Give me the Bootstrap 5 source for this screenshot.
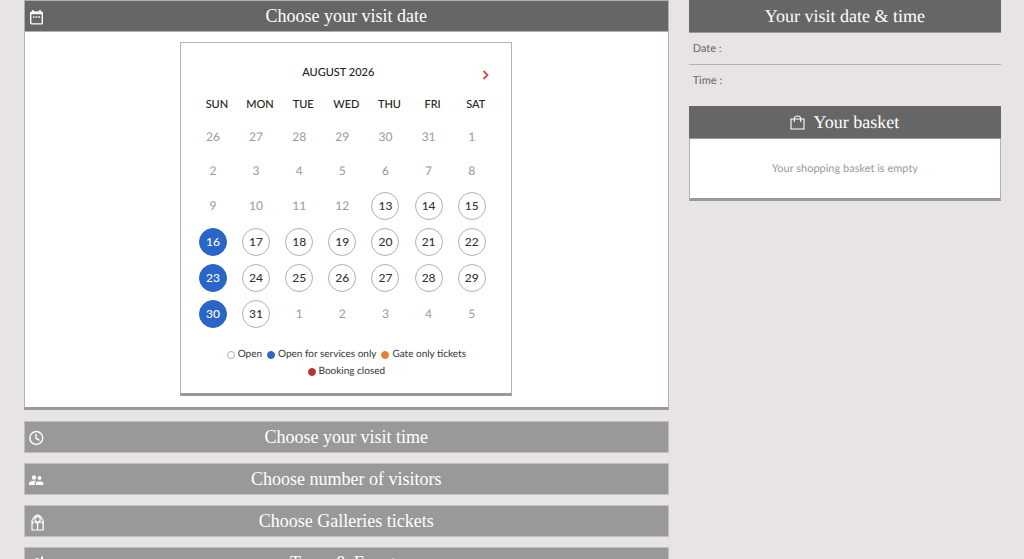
<!DOCTYPE html>
<html lang="en">
<head>
<meta charset="utf-8">
<meta name="viewport" content="width=device-width, initial-scale=1">
<title>Choose your visit date</title>
<link href="https://cdn.jsdelivr.net/npm/bootstrap@5.3.0/dist/css/bootstrap.min.css" rel="stylesheet">
<style>
  body { background: #e8e4e5; font-family: Lato, sans-serif; font-size: 11px; line-height: 16px; color: #333; text-rendering: geometricPrecision; }
  .page { padding: 0 23px 0 24px; }
  .page > .row { --bs-gutter-x: 20px; }
  .bar { font-family: "Liberation Serif", serif; font-size: 18px; line-height: 20px; font-weight: 400; color: #fff; }
  .step { width: 100%; min-height: 32px; padding: 5px 48px; border: 1px solid #c0c0c0; background: #999; position: relative; }
  .step.current { background: #666; border-color: #b0b0b0; }
  .step svg { position: absolute; left: 3px; top: 8px; }
  .steps { padding-top: 11px; row-gap: 10px; }
  .side-bar { background: #666; border-bottom: 1px solid #999; padding: 6px 8px; }
  .framed { background: #fff; border: 1px solid #b3b3b3; border-bottom: 3px solid #999; }
  .step-body { border-top: 0; padding: 10px 0 11px; }
  .calendar { width: 332px; padding: 22px 14px 13px; }
  .month { font-weight: 500; padding-right: 16px; margin-bottom: 8px; color: #222; }
  .next { right: 2px; top: 0; line-height: 1; }
  .days { width: 100%; table-layout: fixed; }
  .days th { font-weight: 500; height: 31px; text-align: center; padding: 0; vertical-align: middle; color: #222; }
  .days td { height: 34px; padding: 0 8px 0 0; text-align: center; vertical-align: middle; color: #999; font-size: 12px; }
  .days .open-row td { height: 36px; }
  .day { width: 28px; height: 28px; padding: 0; border: 1px solid #b0b0b0; border-radius: 50%; background: #fff; color: #333; line-height: 26px; font-weight: 500; display: block; margin: 0 auto; }
  .day.service { background: #2a66c8; border-color: #2a66c8; color: #fff; }
  .legend { font-size: 10px; line-height: 17px; padding: 14px 24px 0; column-gap: 5px; }
  .legend li { column-gap: 3px; }
  .dot { width: 8px; height: 8px; border: 1px solid #b0b0b0; border-radius: 50%; }
  .dot.blue { background: #2a66c8; border-color: #2a66c8; }
  .dot.orange { background: #e8812c; border-color: #e8812c; }
  .dot.red { background: #b7332f; border-color: #b7332f; }
  .detail { margin: 0; padding: 8px 4px 7px; color: #666; }
  .detail + .detail { border-top: 1px solid #b3b3b3; }
  .basket { margin-top: 10px; }
  .basket-body { border-top: 0; padding: 22px 8px 21px; color: #999; }
</style>
</head>
<body>
<div class="container-fluid page">
  <div class="row">
    <main class="col-8">
      <section>
        <h2 class="m-0 d-flex"><button type="button" class="bar step current" aria-expanded="true">
          <svg width="18" height="18" viewBox="0 0 18 18" fill="none" stroke="#fff" stroke-width="1.4" aria-hidden="true"><rect x="2.7" y="3.3" width="11.6" height="11.6" rx="1"/><path d="M5 1v3M12 1v3" stroke-width="1.6"/><path d="M2.7 4h11.6" stroke-width="2.4"/><path d="M5 8h7" stroke-dasharray="1.6 1.1"/></svg>
          Choose your visit date</button></h2>
        <div class="framed step-body">
          <div class="framed calendar mx-auto">
            <div class="month text-center position-relative" aria-live="polite">AUGUST 2026
              <button type="button" class="next btn btn-link p-1 position-absolute" aria-label="Next month"><svg class="d-block" width="8" height="10" viewBox="0 0 8 10" fill="none" stroke="#cd4a4a" stroke-width="1.8" aria-hidden="true"><path d="M1.5 1l4 4-4 4"/></svg></button>
            </div>
            <table class="days">
              <thead><tr><th scope="col">SUN</th><th scope="col">MON</th><th scope="col">TUE</th><th scope="col">WED</th><th scope="col">THU</th><th scope="col">FRI</th><th scope="col">SAT</th></tr></thead>
              <tbody>
                <tr><td>26</td><td>27</td><td>28</td><td>29</td><td>30</td><td>31</td><td>1</td></tr>
                <tr><td>2</td><td>3</td><td>4</td><td>5</td><td>6</td><td>7</td><td>8</td></tr>
                <tr class="open-row"><td>9</td><td>10</td><td>11</td><td>12</td><td><button type="button" class="day">13</button></td><td><button type="button" class="day">14</button></td><td><button type="button" class="day">15</button></td></tr>
                <tr class="open-row"><td><button type="button" class="day service">16</button></td><td><button type="button" class="day">17</button></td><td><button type="button" class="day">18</button></td><td><button type="button" class="day">19</button></td><td><button type="button" class="day">20</button></td><td><button type="button" class="day">21</button></td><td><button type="button" class="day">22</button></td></tr>
                <tr class="open-row"><td><button type="button" class="day service">23</button></td><td><button type="button" class="day">24</button></td><td><button type="button" class="day">25</button></td><td><button type="button" class="day">26</button></td><td><button type="button" class="day">27</button></td><td><button type="button" class="day">28</button></td><td><button type="button" class="day">29</button></td></tr>
                <tr class="open-row"><td><button type="button" class="day service">30</button></td><td><button type="button" class="day">31</button></td><td>1</td><td>2</td><td>3</td><td>4</td><td>5</td></tr>
              </tbody>
            </table>
            <ul class="legend list-unstyled m-0 d-flex flex-wrap justify-content-center">
              <li class="d-flex align-items-center"><span class="dot"></span>Open</li>
              <li class="d-flex align-items-center"><span class="dot blue"></span>Open for services only</li>
              <li class="d-flex align-items-center"><span class="dot orange"></span>Gate only tickets</li>
              <li class="d-flex align-items-center"><span class="dot red"></span>Booking closed</li>
            </ul>
          </div>
        </div>
      </section>
      <div class="d-grid steps">
        <h2 class="m-0 d-flex"><button type="button" class="bar step" aria-expanded="false">
          <svg width="18" height="18" viewBox="0 0 18 18" fill="none" stroke="#fff" stroke-width="1.4" aria-hidden="true"><circle cx="8.3" cy="8" r="6.5"/><path d="M8 4v4.3l3.4 2"/></svg>
          Choose your visit time</button></h2>
        <h2 class="m-0 d-flex"><button type="button" class="bar step" aria-expanded="false">
          <svg width="18" height="18" viewBox="0 0 18 18" fill="#fff" aria-hidden="true"><circle cx="6" cy="5.5" r="2.2"/><circle cx="11.5" cy="6" r="1.9"/><path d="M1 13v-1.6C1 9.6 4 8.7 6 8.7c.8 0 1.5.1 2.2.4C7.2 9.8 6.7 10.7 6.7 11.7V13zM7.800 13v-1.4c0-1.6 2.3-2.4 3.9-2.4s3.7.8 3.7 2.4V13z"/></svg>
          Choose number of visitors</button></h2>
        <h2 class="m-0 d-flex"><button type="button" class="bar step" aria-expanded="false">
          <svg width="18" height="18" viewBox="0 0 18 18" fill="none" stroke="#fff" stroke-width="1.2" aria-hidden="true"><path d="M4 16V8c0-3 2-5.500 5.600-7.300C13.200 2.500 15.200 5 15.200 8v8zM9.600 16v-5M4 11c0-2 1.500-3 2.700-3s2.900 1 2.900 3c0-2 1.500-3 2.900-3s2.700 1 2.700 3"/><circle cx="9.600" cy="5.300" r="2.700"/></svg>
          Choose Galleries tickets</button></h2>
        <h2 class="m-0 d-flex"><button type="button" class="bar step" aria-expanded="false">
          <svg width="18" height="18" viewBox="0 0 18 18" fill="#fff" aria-hidden="true"><circle cx="9" cy="4.5" r="2.5"/><path d="M13 1l2-1v4l-2 2zM3 15c0-4 2-7 6-7s5 3 5 7zM2 5l3-1v2l-2 2z"/></svg>
          Tours &amp; Events</button></h2>
      </div>
    </main>
    <aside class="col-4">
      <section>
        <h2 class="bar side-bar m-0 text-center">Your visit date &amp; time</h2>
        <p class="detail">Date :</p>
        <p class="detail">Time :</p>
      </section>
      <section class="basket">
        <h2 class="bar side-bar m-0 d-flex justify-content-center align-items-center gap-2"><svg width="15" height="16" viewBox="0 0 15 16" fill="none" stroke="#fff" stroke-width="1.1" aria-hidden="true"><path d="M1 5h13v10H1zM4.300 8V5c0-4 6.400-4 6.400 0v3"/></svg>Your basket</h2>
        <div class="framed basket-body text-center">Your shopping basket is empty</div>
      </section>
    </aside>
  </div>
</div>
<script src="https://cdn.jsdelivr.net/npm/bootstrap@5.3.0/dist/js/bootstrap.bundle.min.js"></script>
</body>
</html>
